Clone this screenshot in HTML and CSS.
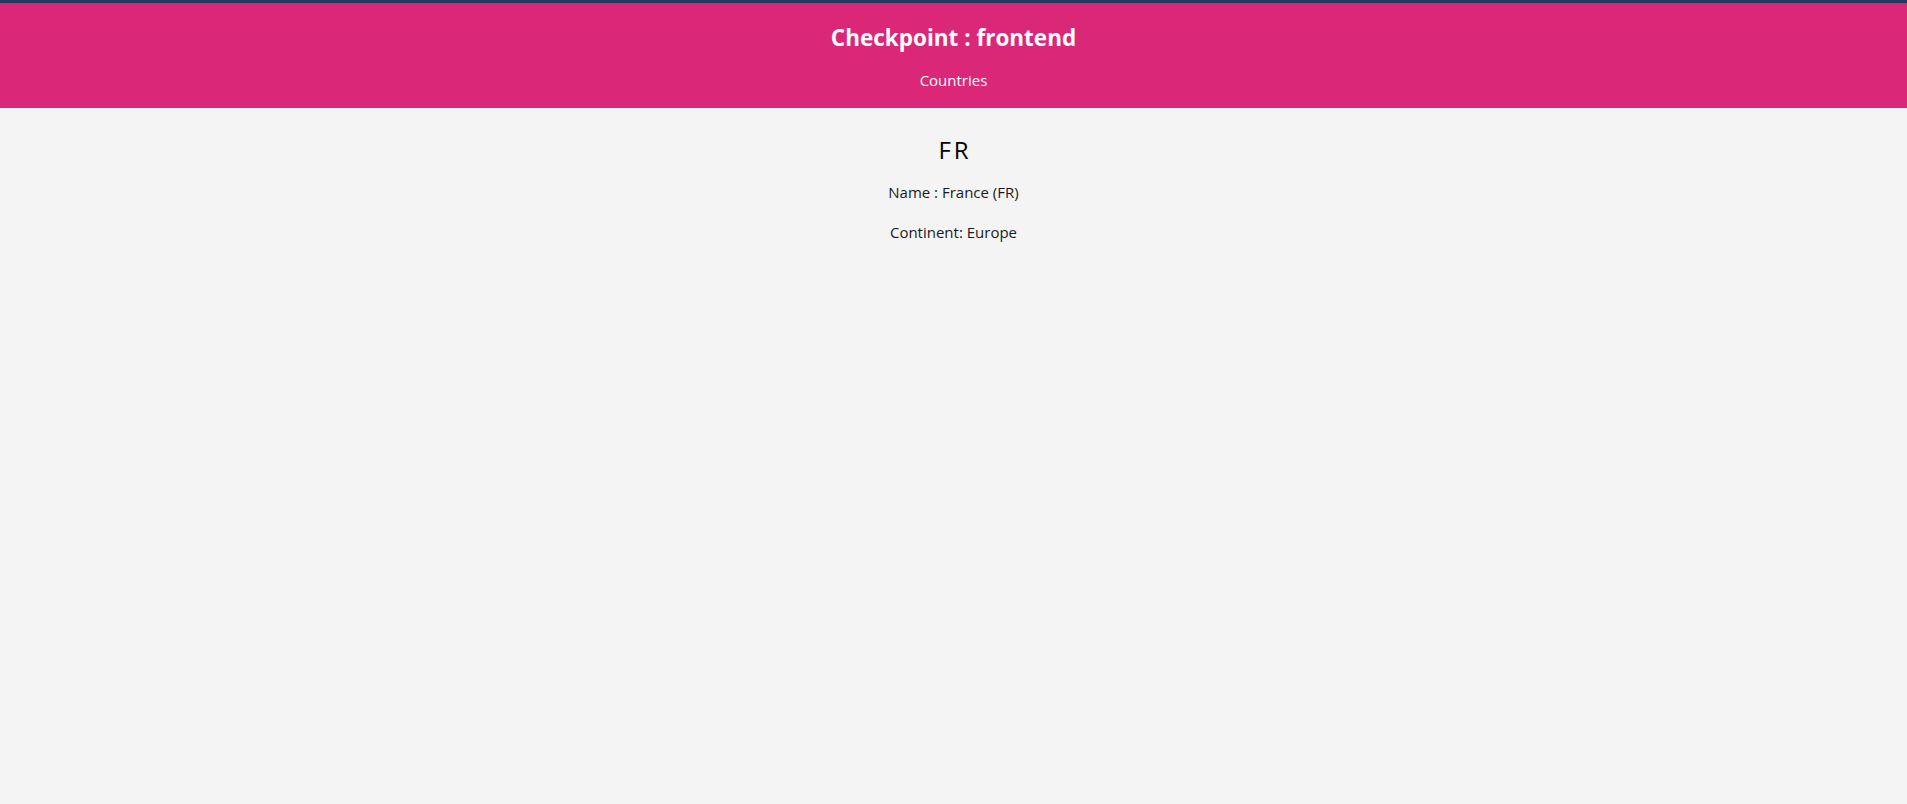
FILE: index.html
```html
<!DOCTYPE html>
<html lang="en">
<head>
<meta charset="utf-8">
<title>Checkpoint : frontend</title>
<link rel="stylesheet" href="styles.css">
</head>
<body>
<header class="header">
  <h1 class="header-title">Checkpoint : frontend</h1>
  <nav class="header-nav"><a class="header-link" href="#">Countries</a></nav>
</header>
<main class="main">
  <h2 class="country-code">FR</h2>
  <p class="country-line">Name : France (FR)</p>
  <p class="country-line">Continent: Europe</p>
</main>
</body>
</html>
```

FILE: styles.css
```css
html, body {
  margin: 0;
  padding: 0;
  height: 100%;
}
body {
  background: #f4f4f4;
  font-family: "Open Sans", "Noto Sans", sans-serif;
  color: #111;
}
.header {
  background: #db2777;
  border-top: 3px solid #1f3a5e;
  height: 105px;
  box-sizing: content-box;
  display: flex;
  flex-direction: column;
  align-items: center;
  color: #fff;
}
.header-title {
  margin: 20px 0 0;
  font-size: 22.5px;
  font-weight: 700;
  line-height: 30px;
}
.header-nav {
  margin-top: 16px;
}
.header-link {
  color: #fff;
  text-decoration: none;
  font-size: 15px;
  line-height: 20px;
}
.main {
  display: flex;
  flex-direction: column;
  align-items: center;
}
.country-code {
  margin: 27px 0 0;
  font-size: 24px;
  font-weight: 400;
  letter-spacing: 3px;
  line-height: 30px;
  color: #000;
  padding-left: 3px;
}
.country-line {
  margin: 15px 0 0;
  font-size: 15px;
  line-height: 24px;
  color: #1a1a1a;
}
.country-line + .country-line {
  margin-top: 16px;
}
```
